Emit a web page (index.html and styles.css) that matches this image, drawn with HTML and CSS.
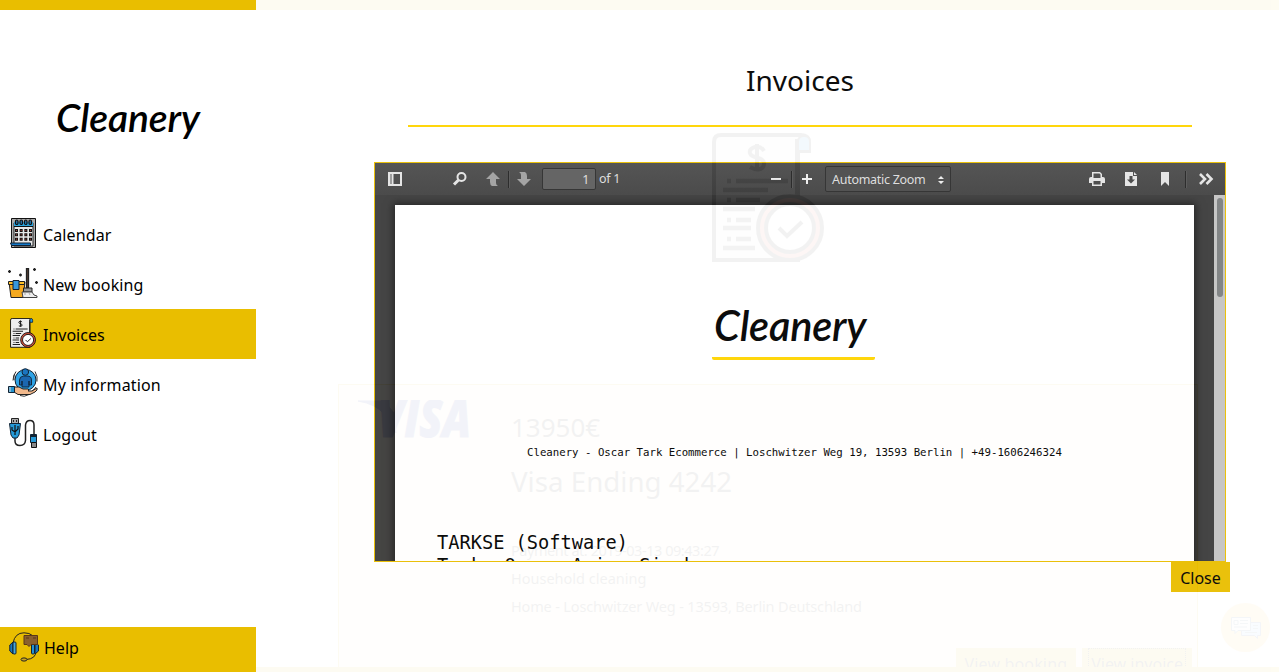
FILE: index.html
```html
<!DOCTYPE html>
<html lang="en">
<head>
<meta charset="utf-8">
<title>Cleanery - Invoices</title>
<link rel="stylesheet" href="styles.css">
</head>
<body>
<svg class="defs">
  <symbol id="invoice" viewBox="0 0 112 130">
    <path d="M2 127V9q0-7 7-7h80q8 0 8 8v8H86v109z" fill="#eee" stroke="#111" stroke-width="4"/>
    <path d="M86 18V9q0-6 6-6 6 0 6 6v9z" fill="#2499e3" stroke="#111" stroke-width="2"/>
    <path d="M85 6v68" stroke="#111" stroke-width="4"/>
    <path d="M52 18q-3-5-9-4c-7 2-7 8 0 10s11 4 8 10q-4 5-13 0M45 11v26" fill="none" stroke="#111" stroke-width="4"/>
    <path d="M15 48h4M24 48h52M11 57h45M15 67h4M24 67h24M11 76h32M15 87h4M24 87h15M11 95h28M15 106h4M24 106h15M11 115h32" stroke="#222" stroke-width="4.500"/>
    <circle cx="78" cy="95" r="32" fill="#e5543f" stroke="#111" stroke-width="4"/>
    <circle cx="78" cy="95" r="24" fill="#fff" stroke="#111" stroke-width="4"/>
    <path d="M67 95l8 8 15-14" fill="none" stroke="#111" stroke-width="4"/>
  </symbol>
</svg>

<nav class="sidebar">
  <div class="logo">Cleanery</div>
  <ul class="menu">
    <li class="item">
      <svg class="icon" viewBox="0 0 30 30"><path d="M3.500.5h24v29h-24z" fill="#aaa" stroke="#111"/><path d="M6 5h19v23H6z" fill="#e8e8e8" stroke="#222"/><path d="M6 4h19v5H6z" fill="#2aa3dc"/><path d="M6 8.500h19" stroke="#111"/><g fill="#2679b5" stroke="#111" stroke-width="1.200"><rect x="7.500" y="2" width="2.500" height="4.500" rx="1.200"/><rect x="12" y="2" width="2.500" height="4.500" rx="1.200"/><rect x="16.500" y="2" width="2.500" height="4.500" rx="1.200"/><rect x="21" y="2" width="2.500" height="4.500" rx="1.200"/></g><path d="M7 12.500h17M7 16.800h17M7 21.200h17" stroke="#111" stroke-width="3" stroke-dasharray="3 1.670"/><path d="M8 12.500h16M8 16.800h16M8 21.200h16" stroke="#a5443a" stroke-dasharray="1 3.670"/><path d="M2.500 25h20v2.500H3.500z" fill="#1379c9" stroke="#123"/></svg>
      Calendar
    </li>
    <li class="item">
      <svg class="icon" viewBox="0 0 30 30"><path d="M1 14h16l-2 15.500H3z" fill="#f4a91f" stroke="#222"/><path d="M.5 13.500h16v3H.5z" fill="#ffc127" stroke="#222"/><path d="M5 12.500h6v9H5z" fill="#3698dc" stroke="#123"/><path d="M18.500.5h2V20h-2z" fill="#5a4235" stroke="#222" stroke-width="1.300"/><path d="M15.500 20h8.500v4h-8.500z" fill="#999" stroke="#222"/><path d="M14 24h10l2 3 3 1v1.500H15z" fill="#eee" stroke="#444"/><path d="M17 25v2M21 25l1 2" stroke="#aaa"/><path d="M1.500 2v3M0 3.500h3M12.500 5.500v3M11 7h3M26.500 0v3M25 1.500h3M28.500 13v3M27 14.500h3" stroke="#222" stroke-width="1.300"/></svg>
      New booking
    </li>
    <li class="item active">
      <svg class="icon"><use href="#invoice"/></svg>
      Invoices
    </li>
    <li class="item">
      <svg class="icon" viewBox="0 0 30 30"><circle cx="17.500" cy="12" r="10.500" fill="#2fa3e6" stroke="#123"/><path d="M8 3.500q-3 4-3 9M6.500 6q-1 3-.5 6M27 3.500q3 5 2 10M28 19q-2 3-4 4M12 27.500q4 2 9-1" fill="none" stroke="#333"/><path d="M11.500 17V12q0-3.500 4-4h3.500q4.500 0 4.500 4v5H21v-4 6h-7v-6 4z" fill="#1b67b0" stroke="#123" stroke-width=".9"/><circle cx="17.300" cy="4" r="3.300" fill="#1b75c0" stroke="#123"/><path d="M6 19h5l4 2h5q2 1 0 2h4l5-3q1 2-2 4l-5 2.500H10L6 24z" fill="#f2b98c" stroke="#222"/><path d="M.5 18.500h6v6h-6z" fill="#2492cc" stroke="#123"/><path d="M2 19v5" stroke="#ddd"/></svg>
      My information
    </li>
    <li class="item">
      <svg class="icon" viewBox="0 0 30 30"><path d="M7 20v3q0 4.500 5 4.500t5.500-5V7q.5-4.500 4.500-4.500T26 7v9" fill="none" stroke="#222" stroke-width="1.500"/><path d="M3.500.5h7V6h-7z" fill="#aaa" stroke="#222"/><path d="M5 2h1v2H5zM8 2h1v2H8z" fill="#222"/><path d="M1.500 5.500h11L11 17l-2 3H5l-2-3z" fill="#259ad8" stroke="#123"/><path d="M7 7v10M4 9v3l3 2 3-3V8" fill="none" stroke="#111" stroke-width="1.200"/><path d="M22.500 16.500h6v8h-6z" fill="#259ad8" stroke="#123"/><path d="M22 18h7" stroke="#123" stroke-width="2"/><path d="M23.500 24.500h5v5h-5z" fill="#888" stroke="#111"/></svg>
      Logout
    </li>
  </ul>
  <div class="help">
    <svg class="icon help-icon" viewBox="0 0 30 30"><path d="M4 11Q6 .8 15 .8q11 0 12 11M27 19q0 8-10 8.500" fill="none" stroke="#222"/><path d="M4 10L.8 13v6L4 22zM26 10l3.500 3v6L26 22z" fill="#1b78bc" stroke="#123"/><rect x="4" y="10" width="3" height="12" rx="1" fill="#45a8dd" stroke="#123"/><rect x="22.500" y="10" width="3" height="12" rx="1" fill="#2292d4" stroke="#123"/><path d="M15 3.500h13.500v9H22l-2 2-2-2h-3z" fill="#8a602d" stroke="#5b3817"/><path d="M17 6h3M24 6h3" stroke="#5b3817"/><ellipse cx="15" cy="27.500" rx="3" ry="1.600" fill="#c9a520" stroke="#222"/></svg>
    Help
  </div>
</nav>

<main class="page">
  <svg class="hero"><use href="#invoice"/></svg>
  <section class="card">
    <svg class="visa" viewBox="0 0 113 38"><path d="M0 1h26l10 12 2 20-12-19Q18 4 0 1z"/><text x="20" y="37" textLength="93" lengthAdjust="spacingAndGlyphs">VISA</text></svg>
    <div class="details">
      <div class="amount">13950€</div>
      <div class="ending">Visa Ending 4242</div>
      <div class="line first">Payment at: 2019-03-13 09:43:27</div>
      <div class="line house">Household cleaning</div>
      <div class="line home">Home - Loschwitzer Weg - 13593, Berlin Deutschland</div>
      <div class="actions"><span class="btn booking">View booking</span><span class="btn"><span class="focus">View invoice</span></span></div>
    </div>
  </section>
  <div class="chat"><svg viewBox="0 0 30 22"><path d="M10.500 5.500h19v13h-3v3l-3-3h-13z" fill="#8acaff" stroke="#347"/><path d="M.5.500h19v13H7l-3 3v-3H.5z" fill="#eef5fa" stroke="#357"/><path d="M3 3.500h4v4H3zM9 3.500h8M9 6.500h8M3 10h13M22 8.500h5M22 11.500h5M14 15.500h12" fill="none" stroke="#468"/></svg></div>
</main>

<div class="overlay">
  <h1 class="title">Invoices</h1>
  <div class="viewer">
    <div class="toolbar">
      <svg class="tool toggle" viewBox="0 0 16 16"><path d="M1 1h14v14H1zM3 3v10h2V3zM6.500 3v10H13V3z" fill="#e4e4e4" fill-rule="evenodd"/><path d="M3 3h2v10H3z" fill="#999"/></svg>
      <svg class="tool find" viewBox="0 0 16 16"><circle cx="9.500" cy="6" r="4" fill="none" stroke="#e4e4e4" stroke-width="2"/><path d="M6.500 9L2 13.500" stroke="#e4e4e4" stroke-width="3"/></svg>
      <svg class="tool prev" viewBox="0 0 16 16"><path d="M8 1l7 7h-4v4q0 2 2 3H7q-2-1-2-4V8H1z" fill="#a0a0a0"/></svg>
      <i class="sep"></i>
      <svg class="tool next" viewBox="0 0 16 16"><path d="M8 15L1 8h4V4q0-2-2-3h6q2 1 2 4v3h4z" fill="#a0a0a0"/></svg>
      <span class="pageno">1</span><span class="of">of 1</span>
      <svg class="tool minus" viewBox="0 0 16 16"><path d="M3 8h10" stroke="#eee" stroke-width="2"/></svg>
      <i class="sep zoomsep"></i>
      <svg class="tool plus" viewBox="0 0 16 16"><path d="M3 8h10M8 3v10" stroke="#eee" stroke-width="2"/></svg>
      <span class="zoom">Automatic Zoom<svg viewBox="0 0 6 8"><path d="M0 3l3-3 3 3zM0 5h6L3 8z" fill="#eee"/></svg></span>
      <svg class="tool print" viewBox="0 0 16 16"><path d="M3 1h8l2 2v3h1q2 0 2 2v4h-3v3H3v-3H0V8q0-2 2-2h1zM4.500 2.500V7h7V3.500l-1-1zM4.500 10v3.500h7V10z" fill="#e4e4e4" fill-rule="evenodd"/></svg>
      <svg class="tool download" viewBox="0 0 16 16"><path d="M2 1h8v4h4v10H2z" fill="#e4e4e4"/><path d="M11 1l3 3h-3z" fill="#e4e4e4"/><path d="M6.500 5h3v3.500H12l-4 4-4-4h2.500z" fill="#444"/></svg>
      <svg class="tool mark" viewBox="0 0 16 16"><path d="M4 1h8v14l-4-4-4 4z" fill="#e4e4e4"/></svg>
      <i class="sep lastsep"></i>
      <svg class="tool more" viewBox="0 0 16 16"><path d="M2 3l5 5-5 5M8.500 3l5 5-5 5" fill="none" stroke="#e4e4e4" stroke-width="2.600"/></svg>
    </div>
    <div class="viewport">
      <article class="sheet">
        <div class="sheet-logo"><span class="sheet-name">Cleanery</span></div>
        <p class="address">Cleanery - Oscar Tark Ecommerce | Loschwitzer Weg 19, 13593 Berlin | +49-1606246324</p>
        <p class="customer">TARKSE (Software)<br>Tark, Oscar Avian Singh</p>
      </article>
      <div class="scrollbar"><div class="thumb"></div></div>
    </div>
  </div>
  <button class="close">Close</button>
</div>
</body>
</html>
```
FILE: styles.css
```css
* { box-sizing: border-box; }
body {
  margin: 0;
  display: flex;
  position: relative;
  width: 1279px;
  height: 672px;
  overflow: hidden;
  background: #fff;
  color: #000;
  font: 16px/24px "Noto Sans", sans-serif;
}
.defs { position: absolute; width: 0; height: 0; }
svg { display: block; flex: none; }

/* Sidebar */
.sidebar {
  width: 256px;
  height: 672px;
  flex: none;
  display: flex;
  flex-direction: column;
  border-top: 10px solid #e9be00;
}
.logo {
  height: 199px;
  padding: 79px 0 0 56px;
  font: italic 600 39px/56px Lato, sans-serif;
  letter-spacing: -0.1px;
}
.menu { margin: 0; padding: 0; list-style: none; letter-spacing: .12px; }
.item {
  height: 50px;
  display: flex;
  align-items: center;
  gap: 5px;
  padding: 1px 0 0 8px;
}
.active { background: #e9be00; letter-spacing: 0; }
.icon { width: 30px; height: 30px; margin-top: -3px; }
.help {
  margin-top: auto;
  height: 45px;
  display: flex;
  align-items: center;
  gap: 5px;
  padding: 0 0 3px 9px;
  background: #e9be00;
}
.help-icon { margin-top: -3px; }

/* Invoice list */
.page {
  position: relative;
  flex: 1;
  height: 672px;
  overflow: hidden;
  border: solid #e9be00;
  border-width: 10px 0 5px;
}
.hero { width: 112px; height: 130px; margin: 123px 0 0 456px; }
.card {
  display: flex;
  width: 860px;
  height: 320px;
  margin: 121px 0 0 82px;
  padding: 15px 5px 0 19px;
  border: 1px solid #e9be00;
  background: #fff0d8;
}
.visa {
  width: 113px;
  height: 38px;
  fill: #0a1a8c;
  stroke: #0a1a8c;
  stroke-width: 1px;
  font: italic 800 51px "Open Sans", sans-serif;
}
.details { flex: 1; padding-left: 40px; }
.amount { font-size: 26px; line-height: 36px; margin-top: 9px; }
.ending { font-size: 27.700px; line-height: 40px; margin-top: 16px; }
.line { height: 28px; font-size: 14.5px; line-height: 28px; white-space: nowrap; }
.first { margin-top: 35px; letter-spacing: -.45px; }
.home { letter-spacing: -.16px; }
.actions { display: flex; justify-content: flex-end; gap: 6px; margin-top: 28px; }
.btn { height: 34px; padding: 4px 9px; background: #e9be00; }
.booking { letter-spacing: .15px; }
.focus { display: block; margin: -3px -2px; padding: 3px 2px; outline: 1px dotted #000; }
.chat {
  position: absolute;
  right: 9px;
  bottom: 15px;
  width: 49px;
  height: 49px;
  display: grid;
  place-items: center;
  border-radius: 50%;
  background: #ffc83c;
}
.chat svg { width: 30px; height: 22px; }

/* Document overlay */
.overlay {
  position: absolute;
  left: 256px;
  top: 0;
  width: 1023px;
  height: 672px;
  padding: 55px 49px 0 118px;
  display: flex;
  flex-direction: column;
  background: #fff;
  opacity: .95;
}
.title {
  width: 784px;
  height: 72px;
  margin: 0 0 35px 34px;
  border-bottom: 2px solid #ffd400;
  font-size: 28px;
  font-weight: 400;
  line-height: 50px;
  text-align: center;
}
.viewer {
  width: 852px;
  height: 400px;
  border: 1px solid #e9be00;
  background: #3c3c3c;
}
.toolbar {
  height: 32px;
  display: flex;
  align-items: center;
  padding-left: 12px;
  color: #ddd;
  font-size: 12.5px;
  letter-spacing: -.28px;
  background: linear-gradient(#4c4c4c, #424242);
  box-shadow: 0 1px 0 #505050;
}
.tool { width: 16px; height: 16px; }
.find { margin-left: 49px; }
.prev { margin-left: 17px; }
.sep { width: 1px; height: 17px; margin: 0 7px; background: #222; box-shadow: 1px 0 0 #555; }
.pageno {
  width: 54px;
  height: 22px;
  margin: -1px 0 0 10px;
  padding-right: 6px;
  border: 1px solid #2c2c2c;
  border-radius: 2px;
  background: #5d5d5d;
  line-height: 21px;
  text-align: right;
}
.of { margin-left: 3px; width: 21px; white-space: nowrap; }
.minus { margin-left: 148px; }
.zoom {
  width: 126px;
  height: 26px;
  margin-left: 10px;
  padding: 1px 6px 0;
  display: flex;
  align-items: center;
  justify-content: space-between;
  border: 1px solid #2c2c2c;
  border-radius: 2px;
  background: #4a4a4a;
}
.zoom svg { width: 6px; height: 8px; }
.print { margin-left: 138px; }
.download, .mark { margin-left: 18px; }
.lastsep { margin: 0 12px; }
.viewport {
  height: 366px;
  display: flex;
  justify-content: space-between;
  padding-left: 20px;
  overflow: hidden;
  background: #3c3c3c;
}
.sheet {
  width: 799px;
  height: 400px;
  margin-top: 10px;
  padding: 0 42px;
  background: #fff;
  box-shadow: 0 0 8px 2px #1c1c1c;
}
.sheet-logo {
  width: 163px;
  height: 155px;
  margin: 0 0 0 275px;
  padding: 91px 0 0 2px;
  border-bottom: 3px solid #ffd400;
  border-radius: 2px;
  font: italic 600 41.5px/58px Lato, sans-serif;
  letter-spacing: -0.2px;
}
.address {
  margin: 84px 0 0 90px;
  font: 10.71px/17px "DejaVu Sans Mono", monospace;
  white-space: nowrap;
}
.customer {
  margin: 70px 0 0;
  font: 18.67px/23px "DejaVu Sans Mono", monospace;
  white-space: nowrap;
}
.scrollbar { width: 11px; height: 366px; padding: 3px 1px 0 3px; background: #c4c4c4; }
.thumb { width: 6px; height: 99px; border-radius: 3px; background: #7c7f80; }
.close {
  width: 59px;
  height: 30px;
  margin: 0 0 0 797px;
  padding: 2px 0 0;
  border: 0;
  background: #e9be00;
  font: 16px/28px "Noto Sans", sans-serif;
}
```
